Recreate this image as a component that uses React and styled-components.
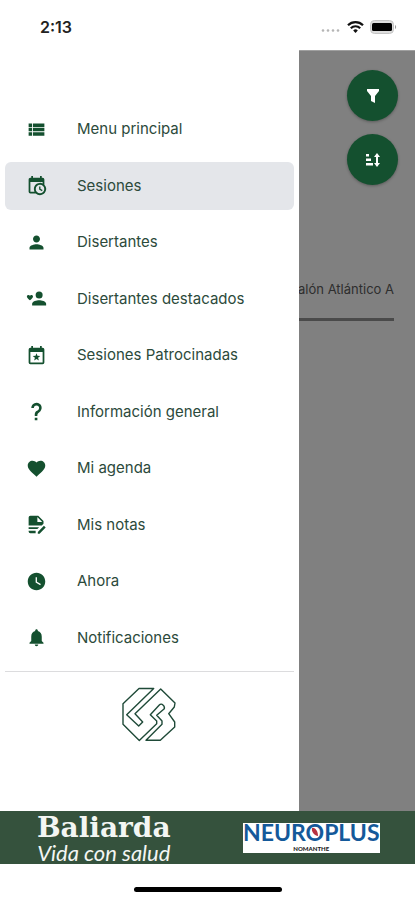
import React from "react"
import styled, { createGlobalStyle } from "styled-components"
import {
  MdViewList,
  MdPerson,
  MdFavorite,
  MdWatchLater,
  MdNotifications,
} from "react-icons/md"

const green = "#14502f"

const GlobalStyle = createGlobalStyle`
  * {
    box-sizing: border-box;
  }
  body {
    margin: 0;
    background: #fff;
    font-family: Inter, "Liberation Sans", sans-serif;
  }
`

const Screen = styled.div`
  display: flex;
  flex-direction: column;
  min-height: 100vh;
`

const StatusBar = styled.header`
  display: flex;
  align-items: center;
  justify-content: space-between;
  height: 50px;
  padding: 4px 18px 0 40px;
  font-size: 16px;
  font-weight: 600;
  line-height: 20px;
  color: #222;
  .status-icons {
    display: flex;
    align-items: center;
    gap: 6px;
  }
`

const Body = styled.div`
  flex: 1;
  display: grid;
  grid-template-columns: 72% 1fr;
`

const Drawer = styled.aside`
  display: flex;
  flex-direction: column;
  background: #fff;
`

const Menu = styled.nav`
  flex: 1;
  display: flex;
  flex-direction: column;
  justify-content: space-between;
  gap: 4px;
  padding: 55px 5px 9px;
`

const MenuLink = styled.a`
  display: flex;
  align-items: center;
  gap: 30px;
  height: 48px;
  padding: 0 21px;
  border-radius: 6px;
  background: ${(props) => (props.$active ? "#e4e6ea" : "transparent")};
  color: #2c4a3b;
  font-size: 15px;
  line-height: 20px;
  text-decoration: none;
  svg {
    flex: none;
    width: 21px;
    height: 21px;
    color: ${green};
  }
`

const DrawerFooter = styled.div`
  display: flex;
  justify-content: center;
  align-items: flex-start;
  height: 140px;
  margin: 0 5px;
  padding-top: 15px;
  border-top: 1px solid #dcdcde;
`

const Backdrop = styled.main`
  display: flex;
  flex-direction: column;
  align-items: flex-end;
  min-width: 0;
  overflow: hidden;
  padding-top: 19px;
  background: #808080;
  border-top: 1px solid #a0a0a0;
`

const Actions = styled.div`
  display: flex;
  flex-direction: column;
  gap: 13px;
  margin-right: 17px;
`

const RoundButton = styled.button`
  display: flex;
  align-items: center;
  justify-content: center;
  width: 51px;
  height: 51px;
  padding: 0;
  border: 0;
  border-radius: 50%;
  background: ${green};
  color: #fff;
  box-shadow: 0 1px 3px rgba(0, 0, 0, 0.3);
`

const Room = styled.div`
  margin: 95px 21px 0 0;
  padding-bottom: 20px;
  border-bottom: 3px solid #4a4a4a;
  color: #2e2e2e;
  font-size: 13px;
  line-height: 18px;
  white-space: nowrap;
`

const Banner = styled.footer`
  display: grid;
  grid-template-columns: 1fr 1fr;
  align-items: center;
  justify-items: center;
  height: 53px;
  background: #35523d;
`

const Baliarda = styled.div`
  padding-top: 3px;
  color: #f3f6f3;
  text-align: center;
  strong {
    display: block;
    font-family: "DejaVu Serif", serif;
    font-size: 28px;
    line-height: 28px;
  }
  em {
    display: block;
    font-family: Lato, sans-serif;
    font-size: 22px;
    line-height: 22px;
  }
`

const Neuroplus = styled.div`
  display: flex;
  flex-direction: column;
  align-items: center;
  gap: 2px;
  width: 137px;
  height: 30px;
  background: #fff;
  color: #14599a;
  font-family: Lato, sans-serif;
  font-size: 23px;
  font-weight: 700;
  line-height: 18px;
  .brand-o {
    position: relative;
  }
  .brand-o svg {
    position: absolute;
    top: 50%;
    left: 50%;
    transform: translate(-50%, -50%);
  }
  small {
    color: #222;
    font-size: 6px;
    font-weight: 900;
    line-height: 12px;
  }
`

const HomeArea = styled.div`
  display: flex;
  align-items: center;
  justify-content: center;
  height: 36px;
  padding-top: 14px;
  &::after {
    content: "";
    width: 148px;
    height: 5px;
    border-radius: 3px;
    background: #000;
  }
`

function Icon({ children }) {
  return (
    <svg viewBox="0 0 24 24" fill="currentColor" aria-hidden="true">
      {children}
    </svg>
  )
}

const CalendarClock = () => (
  <Icon>
    <path d="M15 13h1.500v2.820l2.440 1.410-.75 1.300L15 16.690V13m4-5H5v11h4.670A7 7 0 0 1 9 16a7 7 0 0 1 10-6.330V8M5 21a2 2 0 0 1-2-2V5c0-1.110.890-2 2-2h1V1h2v2h8V1h2v2h1a2 2 0 0 1 2 2v6.100A7 7 0 0 1 16 23a7 7 0 0 1-4.900-2H5m11-9.850A4.850 4.850 0 1 0 16 20.850 4.850 4.850 0 0 0 16 11.150Z" />
  </Icon>
)

const PersonHeart = () => (
  <Icon>
    <circle cx="15" cy="8" r="4" />
    <path d="M15 14c-2.700 0-8 1.300-8 4v2h16v-2c0-2.700-5.300-4-8-4Z" />
    <path d="m4.500 14-.5-.4C2 11.900 1 11 1 9.700 1 8.700 1.800 8 2.800 8c.7 0 1.300.3 1.700.9.4-.6 1-.9 1.700-.9C7.200 8 8 8.700 8 9.700c0 1.300-1 2.200-3 3.900Z" />
  </Icon>
)

const CalendarStar = () => (
  <Icon>
    <path d="M19 20H5V8h14m0-5h-1V1h-2v2H8V1H6v2H5a2 2 0 0 0-2 2v15a2 2 0 0 0 2 2h14a2 2 0 0 0 2-2V5a2 2 0 0 0-2-2Z" />
    <path d="m12 9.500 1.100 2.900 3.200.2-2.500 2 .9 3.100-2.700-1.800-2.700 1.800.9-3.100-2.500-2 3.200-.2Z" />
  </Icon>
)

const Help = () => (
  <Icon>
    <path d="M10 19h3v3h-3v-3M12 2c5.350.22 7.680 5.620 4.500 9.670-.83 1-2.170 1.660-2.830 2.500C13 15 13 16 13 17h-3c0-1.670 0-3.080.67-4.080.66-1 2-1.590 2.830-2.250C15.920 8.430 15.320 5.260 12 5a3 3 0 0 0-3 3H6a6 6 0 0 1 6-6Z" />
  </Icon>
)

const NoteEdit = () => (
  <Icon>
    <path
      fillRule="evenodd"
      d="M5 2h9l6 6v3l-2 2H3V4a2 2 0 0 1 2-2Zm8 1.500V9h5.500L13 3.500Z"
    />
    <path d="M3 15h12l-2 2H3ZM3 19h8v3H5a2 2 0 0 1-2-2ZM13.500 20.500l7-7 2 2-7 7h-2Z" />
  </Icon>
)

const items = [
  { label: "Menu principal", icon: MdViewList },
  { label: "Sesiones", icon: CalendarClock, active: true },
  { label: "Disertantes", icon: MdPerson },
  { label: "Disertantes destacados", icon: PersonHeart },
  { label: "Sesiones Patrocinadas", icon: CalendarStar },
  { label: "Información general", icon: Help },
  { label: "Mi agenda", icon: MdFavorite },
  { label: "Mis notas", icon: NoteEdit },
  { label: "Ahora", icon: MdWatchLater },
  { label: "Notificaciones", icon: MdNotifications },
]

function StatusIcons() {
  return (
    <div className="status-icons">
      <svg width="20" height="14" viewBox="0 0 20 14" fill="#b5b5b5">
        <circle cx="2" cy="10.500" r="1.300" />
        <circle cx="7" cy="10.500" r="1.300" />
        <circle cx="12" cy="10.500" r="1.300" />
        <circle cx="17" cy="10.500" r="1.300" />
      </svg>
      <svg
        width="17"
        height="14"
        viewBox="0 0 17 14"
        fill="none"
        stroke="#111"
        strokeWidth="2.200"
      >
        <path d="M1 5.200a10.500 10.500 0 0 1 15 0M3.800 8.200a6.600 6.600 0 0 1 9.400 0" />
        <path d="m8.500 13-2.300-2.500a3.200 3.200 0 0 1 4.600 0Z" fill="#111" stroke="none" />
      </svg>
      <svg width="27" height="14" viewBox="0 0 27 14">
        <rect x="0.500" y="0.500" width="23" height="13" rx="4" fill="#ddd" stroke="#c4c4c4" />
        <rect x="2" y="3" width="20" height="8" rx="1.500" fill="#000" />
        <path d="M25 5c1.500.5 1.500 3.500 0 4Z" fill="#999" />
      </svg>
    </div>
  )
}

function DrawerLogo() {
  return (
    <svg
      width="54"
      height="56"
      viewBox="0 0 54 56"
      fill="none"
      stroke="#1f4a38"
      strokeWidth="1.400"
      strokeLinejoin="round"
    >
      <path d="M31.700 1.500H17L1 16.700v20.600l16.300 16.200 17.400-16.800V34l-6.400-6.300 9-9.700c1-1 2.600-1.200 3.400-.3 1.300 1 2 2.600 1.600 4l-7.600 6.600L40 34v3.300l-16 16h14.300L52.700 40v-5l-6-8.300 5.600-6.700.7-4L38.700 2 13 26.700l7.700 8.300-4 4-12-11.300Z" />
    </svg>
  )
}

export default function App() {
  return (
    <>
      <GlobalStyle />
      <Screen>
        <StatusBar>
          <span>2:13</span>
          <StatusIcons />
        </StatusBar>
        <Body>
          <Drawer>
            <Menu>
              {items.map(({ label, icon: ItemIcon, active }) => (
                <MenuLink key={label} href="#" $active={active}>
                  <ItemIcon />
                  {label}
                </MenuLink>
              ))}
            </Menu>
            <DrawerFooter>
              <DrawerLogo />
            </DrawerFooter>
          </Drawer>
          <Backdrop>
            <Actions>
              <RoundButton aria-label="Filtrar">
                <svg width="12" height="14" viewBox="0 0 12 14" fill="#fff">
                  <path d="M0 0h12v2L8 7v7l-4-2V7L0 2Z" />
                </svg>
              </RoundButton>
              <RoundButton aria-label="Ordenar">
                <svg width="16" height="14" viewBox="0 0 16 14" fill="#fff">
                  <path d="M1 1h3v2.500H1ZM1 5.500h5V8H1ZM1 10h7v2.500H1ZM12 0l3 4h-2v6h2l-3 4-3-4h2V4H9Z" />
                </svg>
              </RoundButton>
            </Actions>
            <Room>Salón Atlántico A</Room>
          </Backdrop>
        </Body>
        <Banner>
          <Baliarda>
            <strong>Baliarda</strong>
            <em>Vida con salud</em>
          </Baliarda>
          <Neuroplus>
            <span>
              NEUR
              <span className="brand-o">
                O
                <svg width="8" height="10" viewBox="0 0 8 10">
                  <path d="M1 1c3-1 6 3 6 8C4 9 0 5 1 1Z" fill="#b8323f" />
                </svg>
              </span>
              PLUS
            </span>
            <small>NOMANTHE</small>
          </Neuroplus>
        </Banner>
        <HomeArea />
      </Screen>
    </>
  )
}
